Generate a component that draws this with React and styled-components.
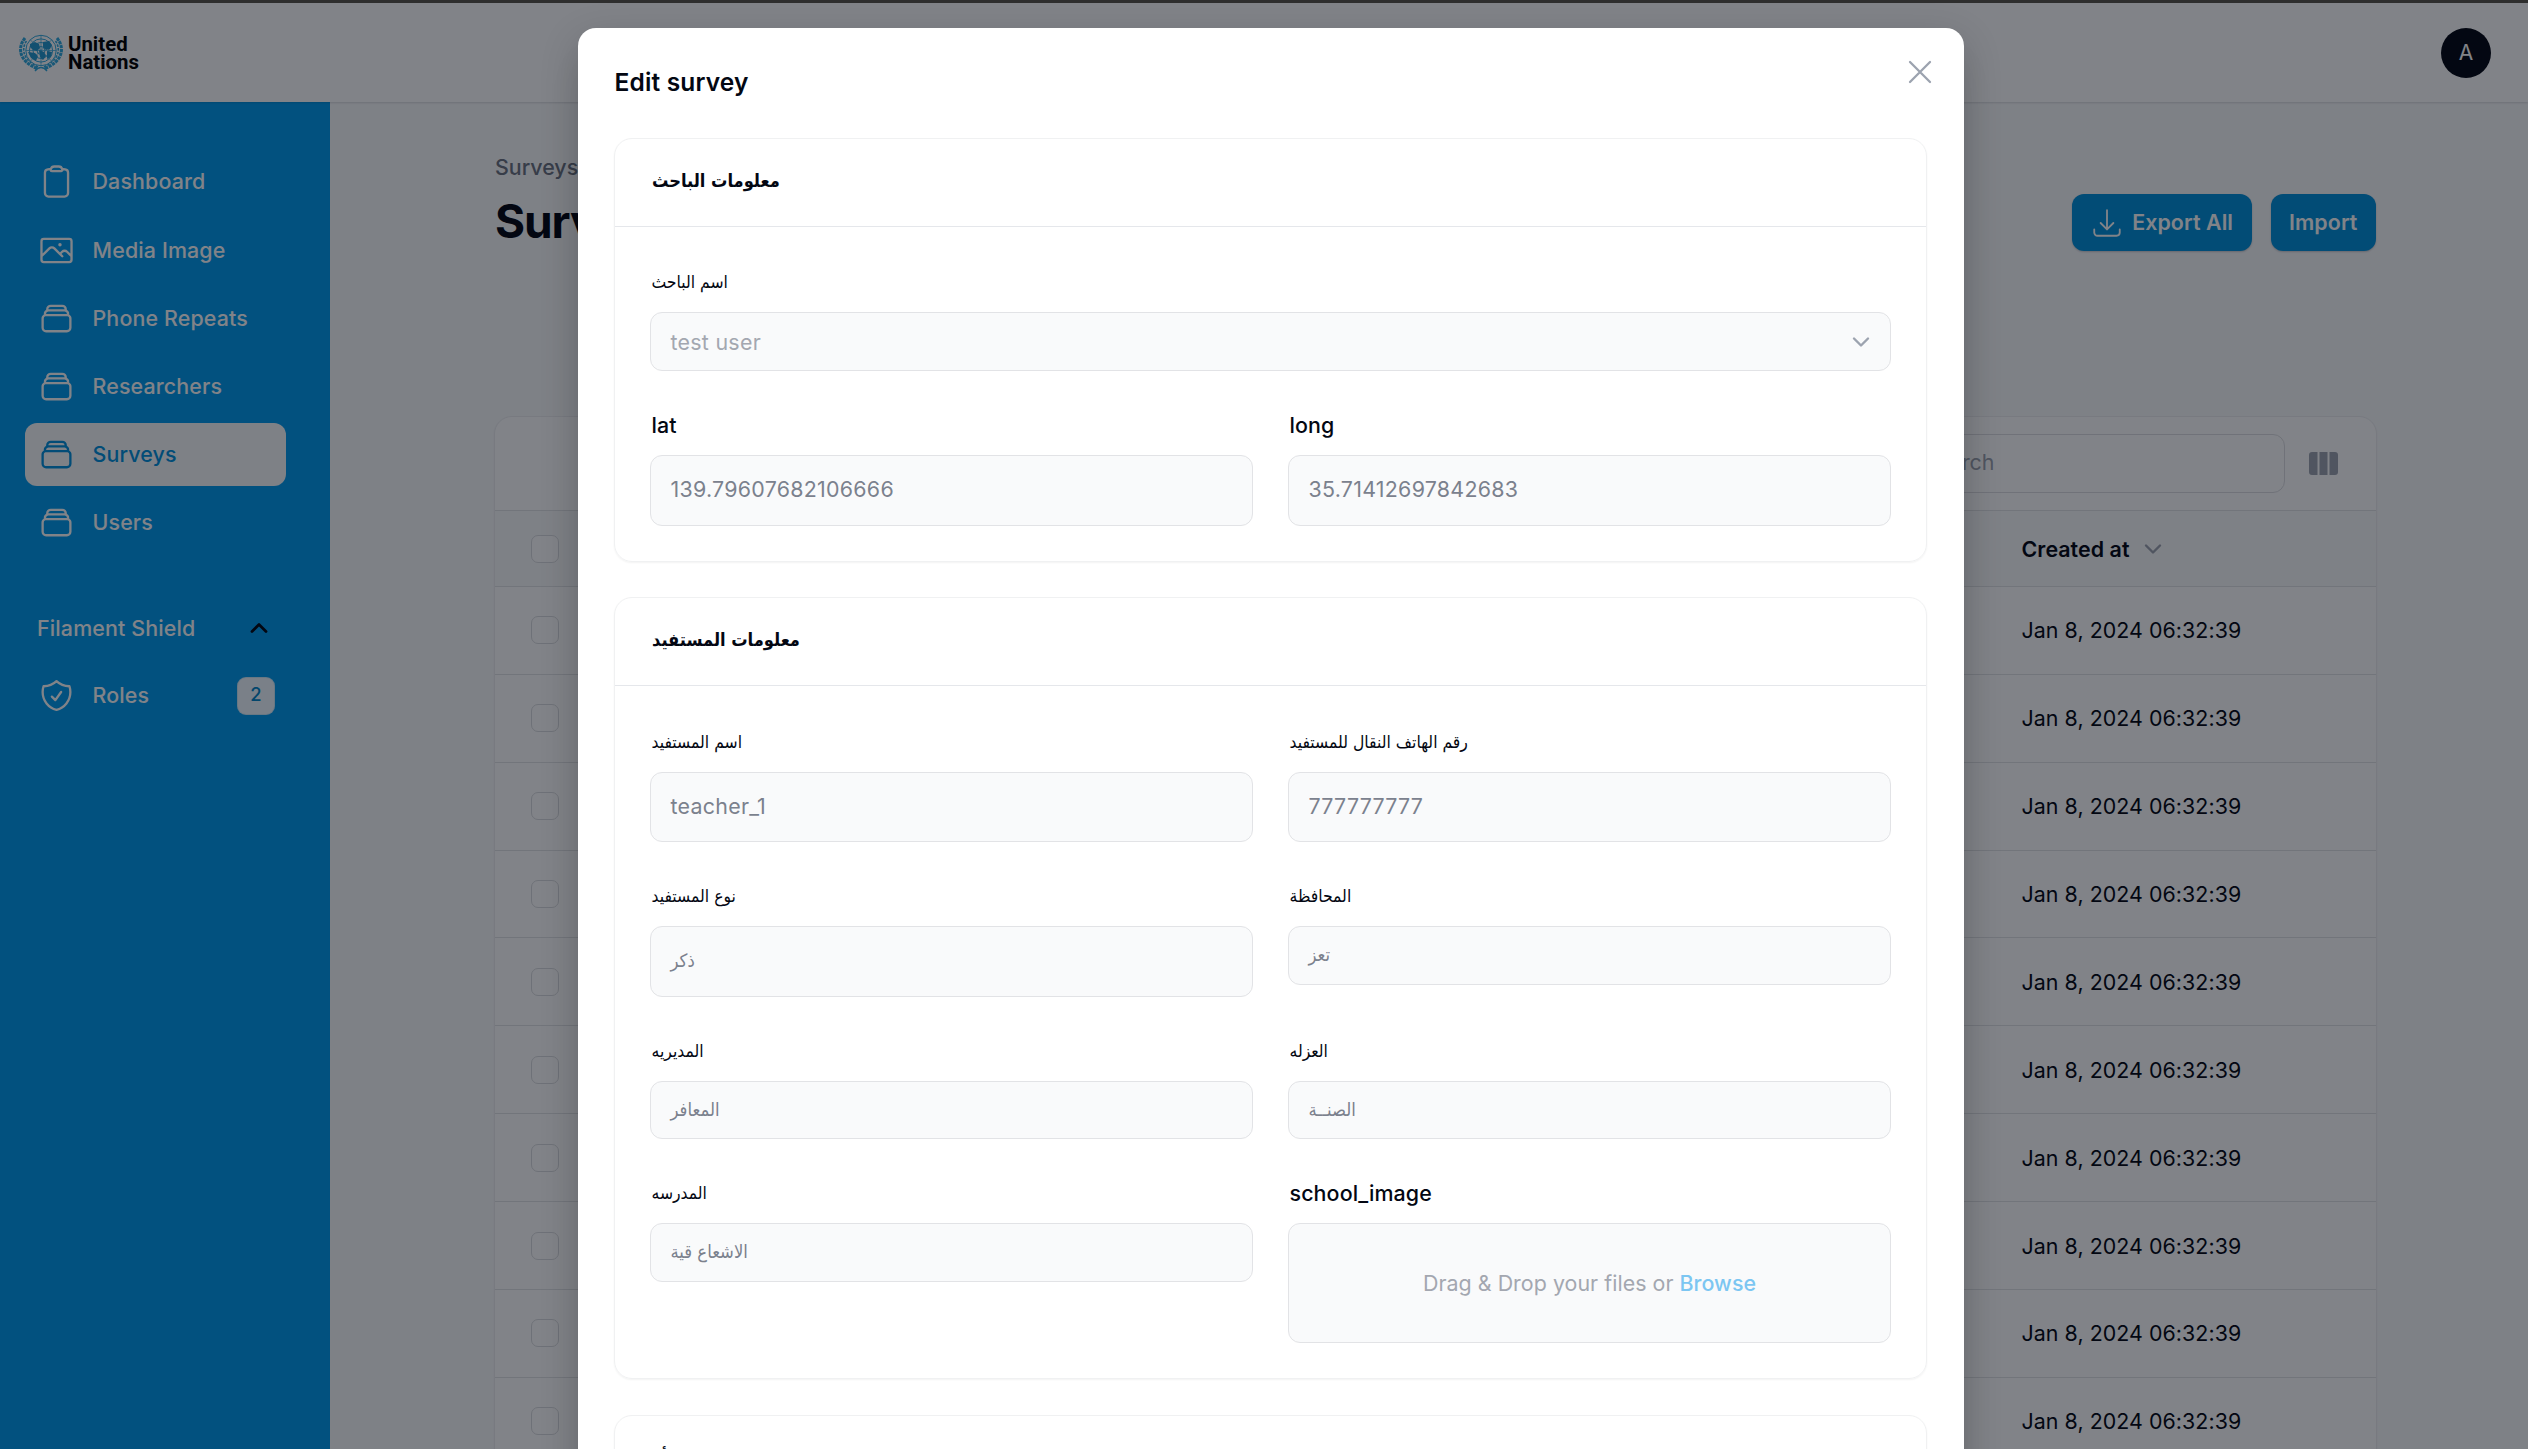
import React from "react";
import styled, { createGlobalStyle, css } from "styled-components";

const Global = createGlobalStyle`
  * { box-sizing: border-box; }
  html, body { margin: 0; padding: 0; overflow: hidden; }
  body {
    font-family: Inter, "DejaVu Sans", sans-serif;
    font-size: 21.4px;
    color: #030712;
    background: #f9fafb;
  }
`;

const arabicFont = css`
  font-family: "DejaVu Sans Condensed", "DejaVu Sans", sans-serif;
  font-stretch: condensed;
`;

const Page = styled.div`
  position: relative;
  display: flex;
  flex-direction: column;
  height: 1449px;
  overflow: hidden;
  background: #f9fafb;
`;

const TopBar = styled.header`
  flex: none;
  display: flex;
  align-items: center;
  justify-content: space-between;
  height: 102px;
  padding: 3px 37px 0 18px;
  background: #fff;
  box-shadow: 0 1px 2px rgba(3, 7, 18, 0.14);
  z-index: 1;
`;

const Brand = styled.div`
  display: flex;
  align-items: center;
  gap: 4px;
  height: 40px;
`;

const BrandName = styled.div`
  display: flex;
  flex-direction: column;
  font: 700 20.4px/18px Roboto, sans-serif;
  color: #000;
`;

const Avatar = styled.div`
  width: 50px;
  height: 50px;
  border-radius: 50%;
  background: #030712;
  color: #fff;
  display: flex;
  align-items: center;
  justify-content: center;
  font-size: 21px;
`;

const Body = styled.div`
  flex: 1;
  display: flex;
  min-height: 0;
`;

const Sidebar = styled.nav`
  flex: none;
  width: 330px;
  padding: 48.4px 44px 0 25px;
  background: #009bed;
  display: flex;
  flex-direction: column;
  gap: 5.2px;
  letter-spacing: 0.15px;
`;

const NavItem = styled.a`
  flex: none;
  display: flex;
  align-items: center;
  height: 63px;
  padding: 0 11px 0 12.5px;
  gap: 18px;
  border-radius: 12px;
  font-weight: 500;
  color: #fff;
  ${(p) => p.$active && css`
    background: #f9fafb;
    color: #0091dc;
  `}
  svg { flex: none; }
`;

const NavLabel = styled.span`
  flex: 1;
  padding-bottom: 1px;
`;

const NavBadge = styled.span`
  width: 38px;
  height: 38px;
  border-radius: 9px;
  background: #f0f9ff;
  box-shadow: inset 0 0 0 1px rgba(2, 132, 199, 0.15);
  color: #0284c7;
  font-size: 18.4px;
  display: flex;
  align-items: center;
  justify-content: center;
  padding-bottom: 3px;
`;

const NavGroup = styled.div`
  display: flex;
  align-items: center;
  justify-content: space-between;
  height: 62px;
  margin-top: 37.5px;
  padding: 0 17px 0 12px;
  font-weight: 500;
  color: #fff;
`;

const Content = styled.main`
  flex: 1;
  padding: 46px 151px 0 164px;
  display: flex;
  flex-direction: column;
`;

const PageHead = styled.div`
  flex: none;
  display: flex;
  justify-content: space-between;
  height: 268.4px;
  padding: 0 1px;
`;

const Crumb = styled.div`
  margin-top: 2px;
  line-height: 34px;
  font-weight: 500;
  color: #6b7280;
`;

const PageTitle = styled.h1`
  margin: 9px 0 0;
  font-size: 46px;
  line-height: 56px;
  font-weight: 700;
  letter-spacing: -1.1px;
`;

const Actions = styled.div`
  display: flex;
  gap: 19px;
  margin-top: 46px;
`;

const ActionButton = styled.button`
  display: flex;
  align-items: center;
  gap: 8px;
  height: 57px;
  padding: 0 18.5px 2px;
  border: 0;
  border-radius: 12px;
  background: #0090da;
  color: #fff;
  font: 600 21.4px Inter, sans-serif;
  letter-spacing: 0.08px;
  box-shadow: 0 1px 2px rgba(3, 7, 18, 0.2);
  svg { margin-top: 3px; }
`;

const TableCard = styled.div`
  flex: none;
  border: 1.5px solid #ecedef;
  border-radius: 18px;
  background: #fff;
  box-shadow: 0 1px 2px rgba(3, 7, 18, 0.06);
`;

const TableTools = styled.div`
  display: flex;
  align-items: center;
  justify-content: flex-end;
  gap: 24px;
  height: 93px;
  padding-right: 38.5px;
`;

const SearchBox = styled.div`
  width: 427px;
  height: 59px;
  padding-left: 65px;
  border: 1.5px solid #dcdde0;
  border-radius: 12px;
  color: #9ca3af;
  line-height: 54px;
`;

const Row = styled.div`
  display: flex;
  align-items: center;
  justify-content: space-between;
  height: ${(p) => (p.$head ? "75.5px" : "87.9px")};
  padding-left: 36px;
  border-top: 1.5px solid #e0e2e5;
  background: ${(p) => (p.$head ? "#f9fafb" : "#fff")};
  font-weight: ${(p) => (p.$head ? 600 : 400)};
`;

const Check = styled.span`
  width: 28px;
  height: 28px;
  border: 1.5px solid #d9dbde;
  border-radius: 7px;
  background: #fff;
`;

const CreatedCell = styled.span`
  width: 354.5px;
  display: flex;
  align-items: center;
  gap: 13px;
  letter-spacing: 0.05px;
`;

const Overlay = styled.div`
  position: absolute;
  inset: 0;
  z-index: 2;
  display: flex;
  justify-content: center;
  align-items: flex-start;
  padding: 25px 0 0 13px;
  border-top: 3px solid #2e2e2e;
  background: rgba(3, 7, 18, 0.5);
`;

const Modal = styled.section`
  width: 1386px;
  height: 1600px;
  padding: 0 37px 0 36px;
  border-radius: 18px;
  background: #fff;
  box-shadow: 0 31px 38px -8px rgba(0, 0, 0, 0.1), 0 12px 38px rgba(0, 0, 0, 0.18);
`;

const ModalHead = styled.div`
  display: flex;
  justify-content: space-between;
  height: 110px;
  padding: 36px 0 0 1px;
`;

const ModalTitle = styled.h2`
  margin: 0;
  font-size: 24.5px;
  line-height: 36px;
  font-weight: 600;
  letter-spacing: 0.16px;
`;

const CloseButton = styled.span`
  margin: -4px -5px 0 0;
  height: 24px;
`;

const Sections = styled.div`
  display: flex;
  flex-direction: column;
  gap: 35.6px;
`;

const Section = styled.div`
  border: 1.5px solid #f0f1f2;
  border-radius: 18px;
  box-shadow: 0 1px 2px rgba(3, 7, 18, 0.05);
`;

const SectionTitle = styled.h3`
  margin: 0;
  height: 87.6px;
  padding: 24px 37.5px 0;
  border-bottom: 1.5px solid #e5e7eb;
  font-size: 18.1px;
  line-height: 36px;
  font-weight: 700;
  ${arabicFont}
`;

const Fields = styled.div`
  display: grid;
  grid-template-columns: 1fr 1fr;
  gap: 36px 35px;
  padding: 37.8px 35px 35px;
`;

const FieldBox = styled.div`
  display: flex;
  flex-direction: column;
  gap: 12px;
  min-width: 0;
  ${(p) => p.$wide && "grid-column: 1 / -1;"}
`;

const Label = styled.label`
  height: 36px;
  padding-left: 2px;
  font-size: 21.4px;
  line-height: 36px;
  font-weight: 500;
  letter-spacing: 0.12px;
  ${(p) => p.$arabic && css`
    ${arabicFont}
    font-size: 17.4px;
    line-height: 37px;
    font-weight: 400;
    letter-spacing: 0;
  `}
`;

const CONTROL_HEIGHT = { tall: "70.6px", short: "58.6px", file: "119.6px" };

const Control = styled.div`
  display: flex;
  align-items: center;
  justify-content: ${(p) => (p.$kind === "file" ? "center" : "space-between")};
  height: ${(p) => CONTROL_HEIGHT[p.$kind]};
  padding: 0 19px ${(p) => (p.$faint ? 0 : 2)}px 20px;
  border: 1.5px solid #e2e3e6;
  border-radius: 12px;
  background: #f9fafb;
  color: ${(p) => (p.$faint ? "#a3a7b0" : "#7b818d")};
  letter-spacing: ${(p) => (p.$kind === "file" ? "0.04px" : "0.27px")};
  ${(p) => p.$arabic && css`
    ${arabicFont}
    font-size: 18.3px;
    letter-spacing: 0;
  `}
`;

const Browse = styled.span`
  margin-left: 6px;
  color: #7cc6f2;
  font-weight: 500;
`;

const hasArabic = (s) => /[\u0600-\u06ff]/.test(s);

function Stroke({ size = 37, width = 1.5, color = "currentColor", d }) {
  return (
    <svg width={size} height={size} viewBox="0 0 24 24" fill="none" stroke={color} strokeWidth={width} strokeLinecap="round" strokeLinejoin="round">
      <path d={d} />
    </svg>
  );
}

const ICONS = {
  clipboard: "M15.666 3.888A2.25 2.25 0 0 0 13.5 2.25h-3c-1.03 0-1.9.693-2.166 1.638m7.332 0c.055.194.084.4.084.612v0a.75.75 0 0 1-.75.75H9a.75.75 0 0 1-.75-.75v0c0-.212.03-.418.084-.612m7.332 0c.646.049 1.288.11 1.927.184 1.1.128 1.907 1.077 1.907 2.185V19.5a2.25 2.25 0 0 1-2.25 2.25H6.75A2.25 2.25 0 0 1 4.5 19.5V6.257c0-1.108.806-2.057 1.907-2.185a48.208 48.208 0 0 1 1.927-.184",
  photo: "m2.25 15.75 5.159-5.159a2.25 2.25 0 0 1 3.182 0l5.159 5.159m-1.5-1.5 1.409-1.409a2.25 2.25 0 0 1 3.182 0l2.909 2.909m-18 3.75h16.5a1.5 1.5 0 0 0 1.5-1.5V6a1.5 1.5 0 0 0-1.5-1.5H3.75A1.5 1.5 0 0 0 2.25 6v12a1.5 1.5 0 0 0 1.5 1.5Zm10.5-11.25h.008v.008h-.008V8.25Zm.375 0a.375.375 0 1 1-.75 0 .375.375 0 0 1 .75 0Z",
  stack: "M6 6.878V6a2.25 2.25 0 0 1 2.25-2.25h7.5A2.25 2.25 0 0 1 18 6v.878m-12 0c.235-.083.487-.128.75-.128h10.5c.263 0 .515.045.75.128m-12 0A2.25 2.25 0 0 0 4.5 9v.878m13.5-3A2.25 2.25 0 0 1 19.5 9v.878m0 0a2.246 2.246 0 0 0-.75-.128H5.25c-.263 0-.515.045-.75.128m15 0A2.25 2.25 0 0 1 21 12v6a2.25 2.25 0 0 1-2.25 2.25H5.25A2.25 2.25 0 0 1 3 18v-6c0-.98.626-1.813 1.5-2.122",
  shield: "M9 12.75 11.25 15 15 9.75m-3-7.036A11.959 11.959 0 0 1 3.598 6 11.99 11.99 0 0 0 3 9.749c0 5.592 3.824 10.29 9 11.623 5.176-1.332 9-6.03 9-11.622 0-1.31-.21-2.571-.598-3.751h-.152c-3.196 0-6.1-1.248-8.25-3.285Z",
  download: "M3 16.5v2.25A2.25 2.25 0 0 0 5.25 21h13.5A2.25 2.25 0 0 0 21 18.75V16.5M16.5 12 12 16.5m0 0L7.5 12m4.5 4.5V3",
};

const Emblem = () => (
  <svg width="46" height="38" viewBox="0 0 46 38" fill="none" stroke="#2fa8dc">
    <g strokeWidth="1">
      <circle cx="23" cy="16.5" r="15.2" />
      <circle cx="23" cy="16.5" r="11.6" />
      <circle cx="23" cy="16.5" r="8" />
      <circle cx="23" cy="16.5" r="4" />
      <path d="M23 1.3v30.4M7.8 16.5h30.4M12.2 5.7l21.6 21.6M33.8 5.7 12.2 27.3" strokeWidth=".7" />
    </g>
    <g fill="#2298ce" stroke="none">
      <path d="m12 10 5-2 4 2 1 4-3 3-4-1-3-3zM25 8l6-1 3 4-2 4-4 1-3-3zM21 16l5 2 2 4-3 4-3-3zM10 18l7 1 3 3-2 5-5-3zM29 17l5 1-1 5-4 2z" />
    </g>
    <g strokeWidth="3" strokeDasharray="3.2 .8">
      <path d="M7 4C-1 14 1 27 19 34.5" />
      <path d="M39 4c8 10 6 23-12 30.5" />
    </g>
    <g strokeWidth="1.6" strokeDasharray="2.6 1.2">
      <path d="M8.500 7C3 15 5 26 20 33" />
      <path d="M37.500 7C43 15 41 26 26 33" />
    </g>
    <path d="M17 37c2-2.500 4-3.500 6-3.500s4 1 6 3.500" strokeWidth="1.3" />
  </svg>
);

const ColumnsIcon = () => (
  <svg width="29" height="23" viewBox="0 0 29 23" fill="#9ca3af">
    <path d="M3 0h5.500v23H3a3 3 0 0 1-3-3V3a3 3 0 0 1 3-3ZM10.500 0h8v23h-8zM20.500 0H26a3 3 0 0 1 3 3v17a3 3 0 0 1-3 3h-5.500z" />
  </svg>
);

const Chevron = ({ up, color, width = 2.4, w = 16 }) => (
  <svg width={w + 4} height={w / 2 + 4} viewBox="0 0 20 12" fill="none" stroke={color} strokeWidth={width} strokeLinecap="round" strokeLinejoin="round">
    <path d={up ? "M3 9.500 10 2.500 17 9.500" : "M3 2.500 10 9.500 17 2.500"} />
  </svg>
);

function Field({ label, value, kind = "tall", wide, faint, children }) {
  return (
    <FieldBox $wide={wide}>
      <Label $arabic={hasArabic(label)}>{label}</Label>
      <Control $kind={kind} $faint={faint} $arabic={hasArabic(value || "")}>
        {children || value}
      </Control>
    </FieldBox>
  );
}

const NAV = [
  ["Dashboard", "clipboard"],
  ["Media Image", "photo"],
  ["Phone Repeats", "stack"],
  ["Researchers", "stack"],
  ["Surveys", "stack"],
  ["Users", "stack"],
];

export default function App() {
  return (
    <Page>
      <Global />
      <TopBar>
        <Brand>
          <Emblem />
          <BrandName>
            <span>United</span>
            <span>Nations</span>
          </BrandName>
        </Brand>
        <Avatar>A</Avatar>
      </TopBar>
      <Body>
        <Sidebar>
          {NAV.map(([name, icon]) => (
            <NavItem key={name} $active={name === "Surveys"}>
              <Stroke d={ICONS[icon]} />
              <NavLabel>{name}</NavLabel>
            </NavItem>
          ))}
          <NavGroup>
            Filament Shield
            <Chevron up color="#030712" width={2.8} />
          </NavGroup>
          <NavItem>
            <Stroke d={ICONS.shield} />
            <NavLabel>Roles</NavLabel>
            <NavBadge>2</NavBadge>
          </NavItem>
        </Sidebar>
        <Content>
          <PageHead>
            <div>
              <Crumb>Surveys</Crumb>
              <PageTitle>Surveys</PageTitle>
            </div>
            <Actions>
              <ActionButton>
                <Stroke size={34} width={1.3} d={ICONS.download} />
                Export All
              </ActionButton>
              <ActionButton>Import</ActionButton>
            </Actions>
          </PageHead>
          <TableCard>
            <TableTools>
              <SearchBox>Search</SearchBox>
              <ColumnsIcon />
            </TableTools>
            <Row $head>
              <Check />
              <CreatedCell>Created at <Chevron color="#9ca3af" /></CreatedCell>
            </Row>
            {Array.from({ length: 10 }, (_, i) => (
              <Row key={i}>
                <Check />
                <CreatedCell>Jan 8, 2024 06:32:39</CreatedCell>
              </Row>
            ))}
          </TableCard>
        </Content>
      </Body>
      <Overlay>
        <Modal>
          <ModalHead>
            <ModalTitle>Edit survey</ModalTitle>
            <CloseButton>
              <svg width="24" height="24" viewBox="0 0 24 24" stroke="#9ca3af" strokeWidth="2.3" strokeLinecap="round">
                <path d="M2 2l20 20M22 2 2 22" />
              </svg>
            </CloseButton>
          </ModalHead>
          <Sections>
            <Section>
              <SectionTitle>معلومات الباحث</SectionTitle>
              <Fields>
                <Field wide kind="short" faint label="اسم الباحث">
                  test user <Chevron color="#9ca3af" />
                </Field>
                <Field label="lat" value="139.79607682106666" />
                <Field label="long" value="35.71412697842683" />
              </Fields>
            </Section>
            <Section>
              <SectionTitle>معلومات المستفيد</SectionTitle>
              <Fields>
                <Field label="اسم المستفيد" value="teacher_1" />
                <Field label="رقم الهاتف النقال للمستفيد" value="777777777" />
                <Field label="نوع المستفيد" value="ذكر" />
                <Field kind="short" label="المحافظة" value="تعز" />
                <Field kind="short" label="المديريه" value="المعافر" />
                <Field kind="short" label="العزله" value="الصنــة" />
                <Field kind="short" label="المدرسه" value="الاشعاع قية" />
                <Field kind="file" faint label="school_image">
                  Drag &amp; Drop your files or <Browse>Browse</Browse>
                </Field>
              </Fields>
            </Section>
            <Section>
              <SectionTitle>بطاقة المنشأة</SectionTitle>
            </Section>
          </Sections>
        </Modal>
      </Overlay>
    </Page>
  );
}
